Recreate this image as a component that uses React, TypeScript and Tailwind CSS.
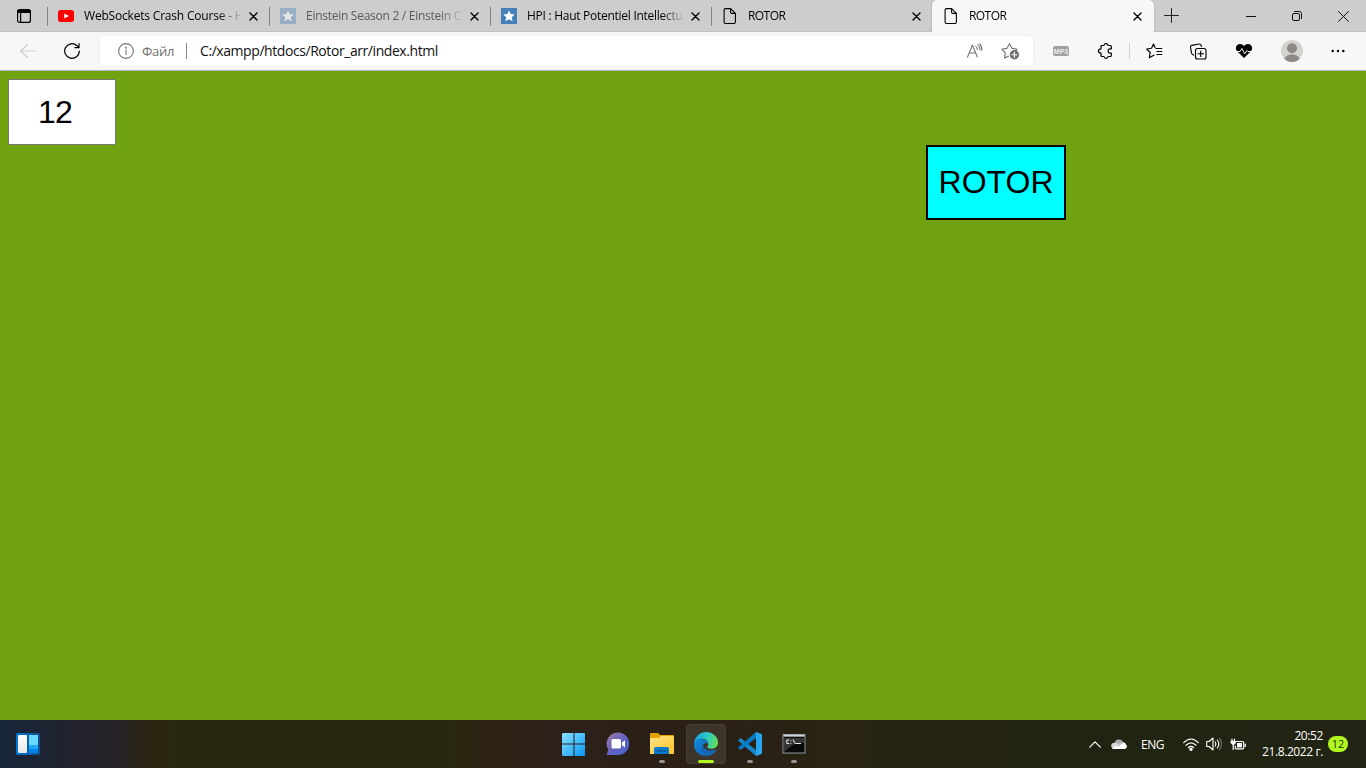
import React from "react";

const line = { fill: "none", stroke: "currentColor", strokeLinecap: "round" as const, strokeLinejoin: "round" as const };

function CloseIcon() {
  return (
    <svg width="9" height="9" viewBox="0 0 9 9" className="shrink-0 text-black" {...line} strokeWidth="1.4">
      <path d="M1 1l7 7M8 1L1 8" />
    </svg>
  );
}

function PageIcon() {
  return (
    <svg width="16" height="16" viewBox="0 0 16 16" className="shrink-0 text-black" {...line} strokeWidth="1.1">
      <path d="M3.600.6h5L13.400 5.400v8.600q0 1.500-1.500 1.500H3.600Q2.100 15.500 2.100 14V2.100Q2.100.6 3.600.6zM8.600.8v3.400q0 1.200 1.200 1.200h3.400" />
    </svg>
  );
}

function YoutubeIcon() {
  return (
    <svg width="16" height="16" viewBox="0 0 16 16" className="shrink-0">
      <rect y="2" width="16" height="12" rx="2.500" fill="#f00" />
      <path d="M6.300 5.400v5.200L10.900 8z" fill="#fff" />
    </svg>
  );
}

function StarSite({ faded }: { faded?: boolean }) {
  return (
    <svg width="16" height="16" viewBox="0 0 16 16" className="shrink-0">
      <rect width="16" height="16" fill={faded ? "#98aec5" : "#4580b8"} />
      <path d="M8 2.500l1.700 3.500 4 .4-3 2.800.9 4.100L8 11.300l-3.600 2 .9-4.100-3-2.800 4-.4z" fill={faded ? "#e2e5e7" : "#fff"} />
    </svg>
  );
}

function Tab({ icon, title, width, text }: { icon: React.ReactNode; title: string; width: string; text: string }) {
  return (
    <div className={`${width} flex h-8 items-center pr-[11px]`}>
      {icon}
      <span className={`ml-[10px] w-[159px] overflow-hidden whitespace-nowrap text-[12px] leading-4 [mask-image:linear-gradient(90deg,#000_134px,transparent_158px)] ${text}`}>
        {title}
      </span>
      <span className="ml-auto flex">
        <CloseIcon />
      </span>
    </div>
  );
}

function Sep() {
  return <div className="mt-[7px] h-[19px] w-px shrink-0 bg-[#858585]" />;
}

function TabStrip() {
  return (
    <div className="flex h-8 bg-[#cdcdcd] shadow-[inset_0_-1px_0_#c1c1c1]">
      <div className="flex h-8 w-[47px] items-center justify-center">
        <svg width="14" height="14" viewBox="0 0 14 14" className="text-black" {...line} strokeWidth="1.200">
          <rect x=".6" y=".6" width="12.800" height="12.800" rx="2" />
          <path d="M1 1.500h12v2H1zM3.600 4v9" />
          <path d="M1 2.500h12" strokeWidth="3" />
        </svg>
      </div>
      <Sep />
      <Tab width="w-[221px] pl-[10px]" icon={<YoutubeIcon />} title="WebSockets Crash Course - H" text="text-black tracking-[-0.190px]" />
      <Sep />
      <Tab width="w-[220px] pl-[10px]" icon={<StarSite faded />} title="Einstein Season 2 / Einstein C" text="text-[#5a5a5a] tracking-[-0.270px]" />
      <Sep />
      <Tab width="w-[220px] pl-[10px]" icon={<StarSite />} title="HPI : Haut Potentiel Intellectu" text="text-black tracking-[-0.270px]" />
      <Sep />
      <Tab width="w-[220px] pl-[10px]" icon={<PageIcon />} title="ROTOR" text="text-black tracking-[-0.560px]" />
      <div className="flex h-8 w-[222px] rounded-t-[5px] bg-[#f7f7f7] shadow-[0_0_2px_#999] [clip-path:inset(0_-3px_0_-3px)]">
        <Tab width="w-[221px] pl-[11px]" icon={<PageIcon />} title="ROTOR" text="text-black tracking-[-0.560px]" />
      </div>
      <svg width="15" height="15" viewBox="0 0 15 15" className="ml-[10px] mt-2 text-[#222]" {...line} strokeWidth="1">
        <path d="M7.500 .5v14M.5 7.500h14" />
      </svg>
      <div className="ml-auto flex text-[#111]">
        <div className="flex w-[46px] items-center justify-center">
          <svg width="10" height="10" viewBox="0 0 10 10" {...line}><path d="M0 5.500h10" /></svg>
        </div>
        <div className="flex w-[46px] items-center justify-center">
          <svg width="10" height="10" viewBox="0 0 10 10" {...line}>
            <rect x=".5" y="2.500" width="7" height="7" rx="1.500" />
            <path d="M2.500 .5h5q2 0 2 2v5" />
          </svg>
        </div>
        <div className="flex w-[46px] items-center justify-center">
          <svg width="11" height="11" viewBox="0 0 11 11" {...line}><path d="M.5.5l10 10M10.500.5l-10 10" /></svg>
        </div>
      </div>
    </div>
  );
}

function Toolbar() {
  return (
    <div className="flex h-[39px] items-center border-b border-[#b8b8b8] bg-[#f7f7f7]">
      <svg width="16" height="16" viewBox="0 0 16 16" className="ml-5 text-[#cfcfcf]" {...line} strokeWidth="1.100">
        <path d="M15.500 8H.6M7.500 1.500L.6 8l6.900 6.500" />
      </svg>
      <svg width="16" height="16" viewBox="0 0 16 16" className="ml-7 text-black" {...line} strokeWidth="1.200">
        <path d="M15.300 8A7.300 7.300 0 1 1 12.800 2.500L15 4.700M15 .6v4.100h-4.100" />
      </svg>
      <div className="ml-5 flex h-[30px] w-[933px] items-center rounded bg-white shadow-[0_0_2px_#e2e2e2]">
        <svg width="16" height="16" viewBox="0 0 16 16" className="ml-[18px] text-[#767676]" {...line} strokeWidth="1.100">
          <circle cx="8" cy="8" r="7.400" />
          <path d="M8 7v4.500" />
          <circle cx="8" cy="4.800" r=".4" fill="currentColor" />
        </svg>
        <span className="ml-2 w-9 whitespace-nowrap text-[13px] leading-5 tracking-[-0.300px] text-[#707070]">Файл</span>
        <span className="ml-2 h-4 w-px bg-[#8a8a8a]" />
        <span className="ml-[13px] whitespace-nowrap text-[14px] leading-5 tracking-[-0.430px] text-[#111]">C:/xampp/htdocs/Rotor_arr/index.html</span>
        <svg width="17" height="16" viewBox="0 0 17 16" className="ml-auto text-[#757575]" {...line} strokeWidth="1.100">
          <path d="M1.500 14L6.400 2l4.900 12M3 10h6.800M9.800 3.400q1.400 1 1.500 3M11.800 1.700q2.300 2 2.200 5M13.800 .8q2.500 2.700 2 6.500" />
        </svg>
        <svg width="19" height="18" viewBox="0 0 19 18" className="ml-[18px] mr-[13px] text-[#717171]" {...line} strokeWidth="1.100">
          <path d="M7.500 14.200L3.600 16.100l.7-5.200L.7 7.200l5.100-.8L8.500 1.700l2.500 4.700 5.200.8-1.700 1.600" />
          <circle cx="13.400" cy="12.700" r="4.700" fill="currentColor" stroke="none" />
          <path d="M13.400 10.200v5M10.900 12.700h5" stroke="#fff" />
        </svg>
      </div>
      <div className="ml-5 flex h-[10px] w-4 items-center justify-center rounded-[2px] bg-[#a0a0a0] font-['Liberation_Sans',sans-serif] text-[7px] font-bold leading-none text-[#eee]">MP3</div>
      <svg width="16" height="16" viewBox="0 0 16 16" className="ml-[28px] text-black" {...line} strokeWidth="1.200">
        <path d="M5 2.500h1.900Q7.300.6 9 .6t2.100 1.900h2.200q1 0 1 1v2.300h-1.500q-1.700.2-1.700 2.200t1.700 2.200h1.500v2.300q0 1-1 1h-2.200Q10.700 15.400 9 15.400t-2.100-1.900H5q-1 0-1-1v-2.300Q1.400 9.900 1.400 8T4 5.800V3.500q0-1 1-1z" />
      </svg>
      <span className="ml-4 h-4 w-px bg-[#d0d0d0]" />
      <svg width="17" height="16" viewBox="0 0 17 16" className="ml-4 text-black" {...line} strokeWidth="1.150">
        <path d="M9.900 5.500H15.800M10.900 8.500h4.900M10.900 11.500h4.900M9 4.500L7.500 1.100 5.500 5.300.7 6l3.500 3.500-.9 5.200 4.600-2.500" />
      </svg>
      <svg width="17" height="17" viewBox="0 0 17 17" className="ml-[27px] text-black" {...line} strokeWidth="1.150">
        <path d="M3.600 12.100Q1.800 11.600 1.500 10L.5 4.300Q.3 2.700 1.800 2.400L9 1q1.500-.2 2 1.200l.3 1.200" />
        <rect x="5.500" y="5.500" width="10.500" height="10.500" rx="2" />
        <path d="M10.750 8v5.500M8 10.750h5.500" />
      </svg>
      <svg width="18" height="16" viewBox="0 0 18 16" className="ml-[28px]">
        <path d="M9 15L1.900 8.100C-.5 4.500 1.500 1 5 1q2.500 0 4 2 1.500-2 4-2c3.500 0 5.500 3.500 3.100 7.100z" fill="#050505" />
        <path d="M0 8.500h5L7 5.500l2.800 5.300L12 7.500l1 1h5" fill="none" stroke="#f7f7f7" strokeWidth="1" />
      </svg>
      <svg width="22" height="22" viewBox="0 0 22 22" className="ml-[28px]">
        <circle cx="11" cy="11" r="11" fill="#d4d2cf" />
        <circle cx="11" cy="8.300" r="5" fill="#8d8986" />
        <path d="M3.500 19q1-4.500 7.500-4.500t7.500 4.500q-3 3-7.500 3t-7.500-3z" fill="#8d8986" />
      </svg>
      <svg width="14" height="4" viewBox="0 0 14 4" className="ml-7"><circle cx="1.700" cy="2" r="1.250" /><circle cx="7" cy="2" r="1.250" /><circle cx="12.300" cy="2" r="1.250" /></svg>
    </div>
  );
}

function Page() {
  return (
    <main className="h-[649px] bg-[#70a30f] font-['Liberation_Sans',sans-serif] text-[32px] text-black">
      <div className="flex h-full justify-between pl-2 pr-[300px]">
        <div className="mt-2 flex h-[66px] w-[108px] items-center rounded-[1px] border border-[#767676] bg-white pl-[29px] leading-9 tracking-[-0.800px]">12</div>
        <div className="mt-[74px] flex h-[75px] w-[140px] items-center justify-center border-2 border-black bg-[#00ffff] pb-[2px] leading-9">ROTOR</div>
      </div>
    </main>
  );
}

function TaskItem({ children, active, dot = true }: { children: React.ReactNode; active?: boolean; dot?: boolean }) {
  return (
    <div className={`flex h-10 w-10 flex-col items-center rounded ${active ? "bg-white/9 ring-1 ring-inset ring-white/5" : ""}`}>
      <div className="flex h-[36px] items-center pt-1">{children}</div>
      {dot && <div className={`h-[3px] rounded-full ${active ? "w-4 bg-[#b1f720]" : "w-[6px] bg-[#949490]"}`} />}
    </div>
  );
}

function Taskbar() {
  return (
    <footer className="flex h-12 items-center justify-between bg-[linear-gradient(90deg,#17263a_0,#1f222e_60px,#262328_115px,#2d2412_152px,#292712_175px,#292712_450px,#2e2312_490px,#2c211a_550px,#2b2015_650px,#282313_850px,#222412_1080px,#222413_1366px)]">
      <div className="w-[554px] pl-4">
        <svg width="24" height="22" viewBox="0 0 24 22">
          <defs>
            <linearGradient id="wl" x1="0" x2="1"><stop stopColor="#0078d4" /><stop offset="1" stopColor="#124c8d" /></linearGradient>
            <linearGradient id="ww" x1="0" y1="0" x2="0" y2="1"><stop stopColor="#fff" /><stop offset="1" stopColor="#e8e8e8" /></linearGradient>
          </defs>
          <rect width="24" height="22" rx="1.500" fill="url(#wl)" />
          <rect x="2" y="2" width="9" height="18" rx="1" fill="url(#ww)" />
          <path d="M13 2h9v10h-9z" fill="#69d7ff" /><path d="M13 12h9v4h-9z" fill="#1ba8f8" /><path d="M13 16h9v4h-9z" fill="#0084eb" />
        </svg>
      </div>
      <div className="flex gap-1">
        <TaskItem dot={false}>
          <svg width="24" height="24" viewBox="0 0 24 24">
            <defs><linearGradient id="win" x1="0" y1="0" x2="1" y2="1"><stop stopColor="#8be2ff" /><stop offset="1" stopColor="#0797f7" /></linearGradient></defs>
            <path d="M1 1h10.500v10.500H0V2zM12.500 1h10l.5 1v9.500H12.500zM0 12.500h11.500V24H1l-1-1zM12.500 12.500H23V23l-.5 1h-10z" fill="url(#win)" />
          </svg>
        </TaskItem>
        <TaskItem dot={false}>
          <svg width="24" height="24" viewBox="0 0 24 24">
            <defs><linearGradient id="chat" x1="0" y1="0" x2="1" y2="1"><stop stopColor="#a078a4" /><stop offset=".55" stopColor="#5f62bf" /><stop offset="1" stopColor="#4267d7" /></linearGradient></defs>
            <path d="M.7 23l1.500-5.500A11.300 11.300 0 1 1 12 23z" fill="url(#chat)" />
            <rect x="5.500" y="7" width="9.500" height="9.500" rx="1.500" fill="#fff" /><path d="M16 10.500l3-2.200v7.200l-3-2.200z" fill="#fff" />
          </svg>
        </TaskItem>
        <TaskItem>
          <svg width="24" height="24" viewBox="0 0 24 24">
            <defs><linearGradient id="fold" x1="0" y1="0" x2="1" y2="1"><stop stopColor="#ffe48a" /><stop offset="1" stopColor="#ffc226" /></linearGradient></defs>
            <path d="M0 2q0-1 1-1h7l2 2h13q1 0 1 1v4H0z" fill="#e3a108" />
            <path d="M0 6h9l2-2h12q1 0 1 1v17H0z" fill="url(#fold)" />
            <path d="M4 22v-5q0-2 2-2h11q2 0 2 2v5z" fill="#0879cf" /><path d="M7 19h9" stroke="#055897" strokeWidth="1.500" />
          </svg>
        </TaskItem>
        <TaskItem active>
          <svg width="24" height="24" viewBox="0 0 24 24">
            <defs>
              <linearGradient id="ed1" x1="0" y1=".3" x2="1" y2=".5"><stop stopColor="#18a4e8" /><stop offset=".6" stopColor="#30cbbd" /><stop offset="1" stopColor="#66df50" /></linearGradient>
              <linearGradient id="ed2" x1="0" y1="0" x2="1" y2="1"><stop stopColor="#168be0" /><stop offset="1" stopColor="#0764b8" /></linearGradient>
            </defs>
            <path d="M0 11C1 4.500 6 0 12 0c7 0 12 5 12 10.600 0 4-3 6.100-6 6.100-3.700 0-4.900-1-4.600-2 .1-.6 1-1 .9-2.700C14 8.500 10 6 6 7 3 7.700 1 9.400 0 11z" fill="url(#ed1)" />
            <path d="M0 12C.4 8.500 3.500 6.400 7 6.900c4 .4 7 2.500 7.300 5.100-1.400-1.600-4.500-1-5.500 1.200-1.500 3.400.4 9.300 5.800 10.500C6 25.500-.5 19 0 12z" fill="url(#ed2)" />
            <path d="M9 13c-2.200 3.800.6 9.900 5.600 10.700 3.300-.8 6-2.800 7.600-5.500.3-.7-.3-1-.9-.7-5.300 2.300-10.900.5-12.300-4.500z" fill="#1468b6" />
          </svg>
        </TaskItem>
        <TaskItem>
          <svg width="24" height="24" viewBox="0 0 24 24">
            <path d="M18 0l6 2.500v19L18 24 0 8.500 2.500 6l15.500 12z" fill="#1686cd" />
            <path d="M0 15.500L18 0v6L2.500 18z" fill="#087ac5" />
            <path d="M18 0l6 2.500v19L18 24z" fill="#29a5ef" />
          </svg>
        </TaskItem>
        <TaskItem>
          <svg width="24" height="22" viewBox="0 0 24 22" className="-ml-px">
            <rect x="1" y="1.500" width="22" height="18.500" fill="#090909" stroke="#9299a0" />
            <path d="M1.500 2.700h21" stroke="#ccd2d9" strokeWidth="2" />
            <path d="M2 5h20v5Q14 9 8 14L2 19z" fill="#373737" />
            <path d="M7.300 7H4.800v3.500h2.500M9 7.500v.8M9 10v.8M11 6.500l2.500 4.500M14 10.500h5" stroke="#e8e8e8" fill="none" />
          </svg>
        </TaskItem>
      </div>
      <div className="flex w-[552px] items-center justify-end pr-[18px] text-white">
        <svg width="12" height="7" viewBox="0 0 12 7" {...line} strokeWidth="1.200"><path d="M.7 6.200L6 .9l5.300 5.300" /></svg>
        <svg width="16" height="12" viewBox="0 0 16 12" className="ml-[10px]">
          <path d="M3.600 5A4.500 4.500 0 0 1 12 4l-7 6z" fill="#aaa" /><path d="M1 10Q-1 6.500 2 5q3-1 5 1l6 4.500H3z" fill="#d7d7d7" /><path d="M1 10.500l10-6q3-1 4 2 2 2.500-.5 4.300Q13 11.300 3 11 1.600 11 1 10.500z" fill="#fff" />
          <path d="M7 6l4-2 2 .5-7 5z" fill="#c3c3c3" />
        </svg>
        <span className="ml-[14px] w-6 whitespace-nowrap pt-[2px] text-[12px] leading-4 tracking-[-0.500px]">ENG</span>
        <svg width="16" height="13" viewBox="0 0 16 13" className="ml-[18px]" {...line} strokeWidth="1.200">
          <path d="M.7 4.700Q8-2.700 15.300 4.700M3 7.200q5-4.800 10 0M5.400 9.500q2.600-2.300 5.200 0" /><circle cx="8" cy="11.200" r="1.100" fill="currentColor" />
        </svg>
        <svg width="16" height="14" viewBox="0 0 16 14" className="ml-[7px]" {...line} strokeWidth="1.100">
          <path d="M.7 4.500h2.500L7 1v12L3.200 9.500H.7zM9.200 4.800q1.500 2.200 0 4.400M11.300 3q3 4 0 8" /><path d="M13.400 1.300q4 5.700 0 11.400" opacity=".4" />
        </svg>
        <svg width="16" height="13" viewBox="0 0 16 13" className="ml-2" {...line} strokeWidth="1.200">
          <path d="M6.500 3.500h6q1.200 0 1.200 1.200v5q0 1.200-1.200 1.200h-6q-1.200 0-1.200-1.200V8M2 1v2M4.500 1v2M3.200 6v5.500M15.300 6v2.500" />
          <path d="M1 3h4.500v2.200L4.200 6.500H2.300L1 5.200z" fill="currentColor" strokeWidth=".5" /><path d="M7 5h5v4.400H7z" fill="currentColor" stroke="none" />
        </svg>
        <div className="ml-[15px] w-[62px] whitespace-nowrap text-right text-[12px] leading-4 tracking-[-0.400px]">
          <div>20:52</div><div>21.8.2022 г.</div>
        </div>
        <div className="ml-[5px] flex h-4 w-5 items-center justify-center rounded-full bg-[#b1f720] pb-px text-[11px] leading-none text-[#25330b]">12</div>
      </div>
    </footer>
  );
}

export default function App() {
  return (
    <div className="h-[768px] w-[1366px] overflow-hidden font-['Open_Sans','Noto_Sans',sans-serif]">
      <TabStrip />
      <Toolbar />
      <Page />
      <Taskbar />
    </div>
  );
}
